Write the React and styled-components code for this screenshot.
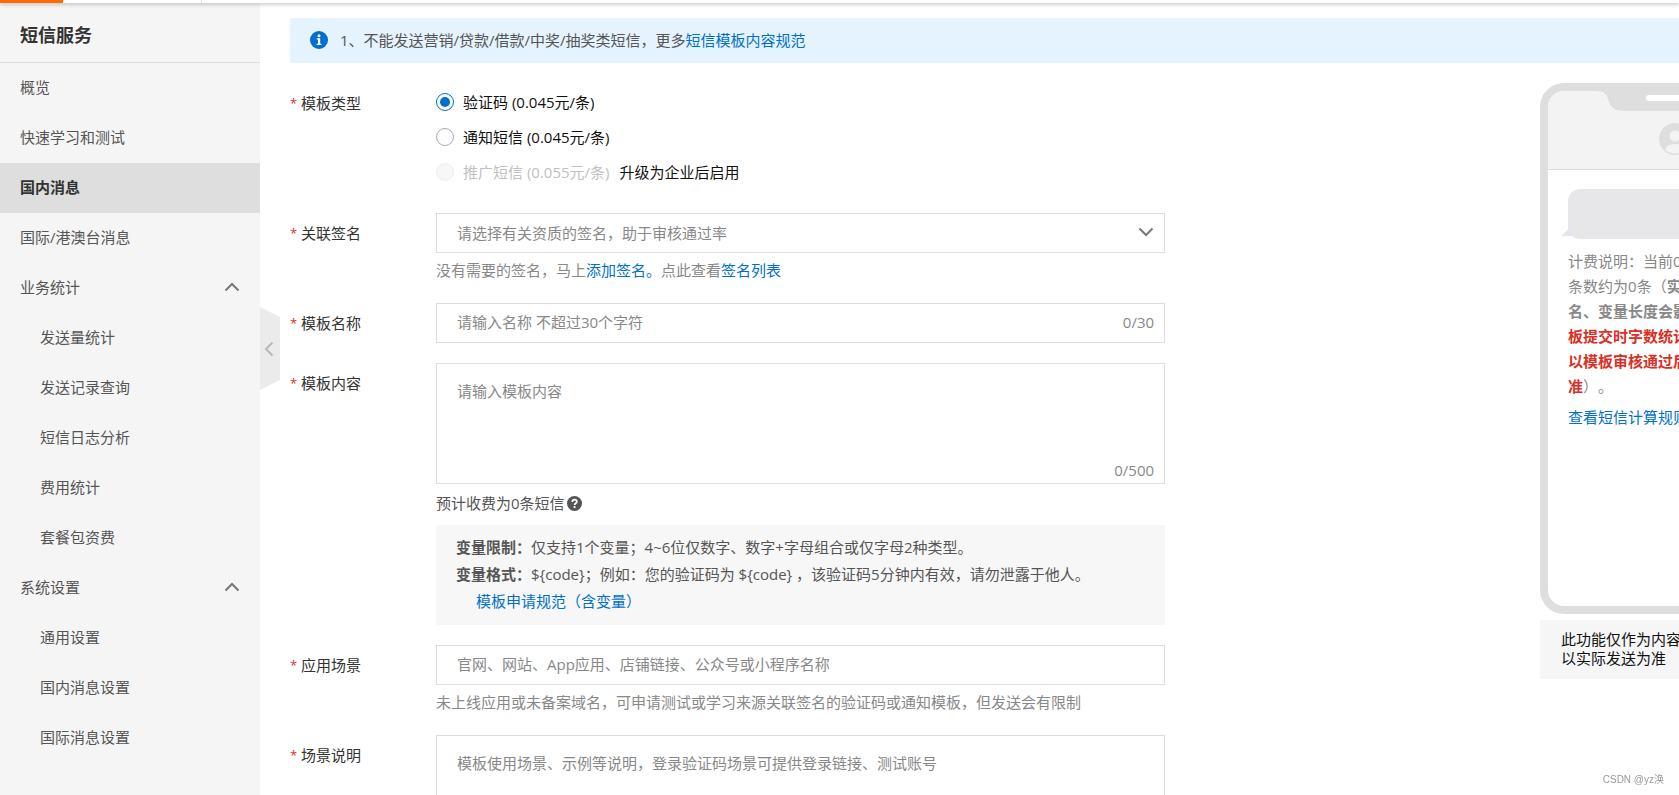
import React, { useState } from "react";
import styled, { createGlobalStyle } from "styled-components";

const GlobalStyle = createGlobalStyle`
  * {
    box-sizing: border-box;
  }

  body {
    margin: 0;
    overflow: hidden;
    background: #fff;
    color: #111;
    font-family: "Open Sans", "Noto Sans CJK SC", sans-serif;
    font-size: 15px;
    line-height: 20px;
    text-spacing-trim: space-all;
  }

  button, input, select, textarea {
    font: inherit;
  }

  a {
    color: #0070cc;
    text-decoration: none;
  }
`;

const Page = styled.div`
  display: flex;
  flex-direction: column;
  height: 100vh;
`;

const TopBar = styled.header`
  position: relative;
  z-index: 2;
  display: flex;
  flex: none;
  height: 3px;
  background: #fff;
  box-shadow: 0 1px 4px rgba(0, 0, 0, 0.3);
`;

const MenuMark = styled.div`
  width: 63px;
  background: #ff6a00;
`;

const TopDivider = styled.div`
  width: 139px;
  border-right: 1px solid #e3e3e3;
`;

const Body = styled.div`
  display: flex;
  flex: 1;
  min-height: 0;
`;

const Sidebar = styled.nav`
  position: relative;
  flex: none;
  width: 260px;
  background: #f5f5f5;
`;

const SideTitle = styled.h1`
  margin: 0;
  padding: 6px 20px 0;
  border-bottom: 1px solid #ddd;
  color: #333;
  font-size: 18px;
  line-height: 53px;
`;

const NavLink = styled.a`
  display: block;
  padding: 0 20px 2px ${(props) => (props.$sub ? "40px" : "20px")};
  background: ${(props) => (props.$active ? "#dedede" : "transparent")};
  color: ${(props) => (props.$active ? "#333" : "#555")};
  font-weight: ${(props) => (props.$active ? "bold" : "normal")};
  line-height: 48px;
`;

const NavGroup = styled.button`
  display: flex;
  align-items: center;
  justify-content: space-between;
  width: 100%;
  padding: 0 20px 2px;
  border: none;
  background: none;
  color: #555;
  line-height: 48px;
  cursor: pointer;
`;

const CollapseButton = styled.button`
  position: absolute;
  top: 304px;
  left: 100%;
  z-index: 1;
  display: flex;
  align-items: center;
  width: 20px;
  height: 83px;
  padding: 0 4px;
  border: none;
  background: #ebebeb;
  clip-path: polygon(0 0, 100% 10px, 100% 73px, 0 100%);
  cursor: pointer;
`;

const Main = styled.main`
  flex: 1;
  min-width: 0;
  padding: 15px 0 0 30px;
  overflow: hidden;
`;

const Notice = styled.div`
  display: flex;
  align-items: center;
  gap: 12px;
  height: 45px;
  padding: 0 0 1px 20px;
  background: #e4f3fe;
  color: #555;
`;

const Columns = styled.div`
  display: grid;
  grid-template-columns: 63fr 27fr 10fr;
  padding-top: 20px;
`;

const Form = styled.form`
  display: flex;
  flex-direction: column;
  gap: 20px;
`;

const Row = styled.div`
  display: flex;
`;

const Label = styled.label`
  display: flex;
  flex: none;
  align-items: center;
  width: 146px;
  height: 40px;
  color: #333;
`;

const Required = styled.span`
  width: 11px;
  color: #d93026;
  font-size: 13px;
`;

const Control = styled.div`
  flex: 1;
  min-width: 0;
`;

const RadioList = styled.div`
  padding: 1px 0 4px;
`;

const RadioRow = styled.div`
  display: flex;
  align-items: center;
  gap: 10px;
  height: 35px;
`;

const RadioLabel = styled.label`
  display: flex;
  align-items: center;
  gap: 9px;
  color: ${(props) => (props.$disabled ? "#c1c1c1" : "#111")};
`;

const Radio = styled.input`
  appearance: none;
  display: grid;
  place-items: center;
  width: 18px;
  height: 18px;
  margin: 0;
  border: 1px solid #aaa;
  border-radius: 50%;
  background: #fff;

  &:checked {
    border-color: #0070cc;
  }

  &:checked::before {
    content: "";
    width: 10px;
    height: 10px;
    border-radius: 50%;
    background: #0070cc;
  }

  &:disabled {
    border-color: #eee;
    background: #f7f7f7;
  }
`;

const FieldBox = styled.div`
  position: relative;
  display: flex;
`;

const Select = styled.select`
  appearance: none;
  width: 100%;
  height: 40px;
  padding: 0 50px 1px 20px;
  border: 1px solid #ddd;
  border-radius: 0;
  background: #fff;
  color: #888;
`;

const Input = styled.input`
  width: 100%;
  height: 40px;
  padding: 0 60px 2px 20px;
  border: 1px solid #ddd;
  color: #333;

  &::placeholder {
    color: #888;
  }
`;

const TextArea = styled.textarea`
  width: 100%;
  height: 121px;
  padding: 16px 20px;
  border: 1px solid #ddd;
  color: #333;
  line-height: 22px;
  resize: none;

  &::placeholder {
    color: #888;
  }
`;

const SelectArrow = styled.span`
  position: absolute;
  top: 0;
  right: 11px;
  display: flex;
  align-items: center;
  height: 38px;
  pointer-events: none;
`;

const Counter = styled.span`
  position: absolute;
  right: 11px;
  bottom: ${(props) => (props.$area ? "4px" : "11px")};
  color: #888;
`;

const Help = styled.p`
  margin: 0;
  padding-top: 4px;
  color: #888;
  line-height: 26px;
`;

const Charge = styled.p`
  display: flex;
  align-items: center;
  gap: 2px;
  height: 41px;
  margin: 0;
  padding-bottom: 3px;
  color: #555;
`;

const Rules = styled.div`
  padding: 9px 20px 10px;
  background: #f7f7f7;
  color: #555;
  line-height: 27px;

  p {
    margin: 0;
  }

  p:last-child {
    padding-left: 20px;
  }
`;

const Preview = styled.aside`
  min-width: 0;
`;

const Phone = styled.div`
  width: 268px;
  height: 531px;
  border: 8px solid #dedede;
  border-radius: 24px;
  overflow: hidden;
`;

const PhoneTop = styled.div`
  height: 79px;
  border-bottom: 1px solid #dedede;
  background: #f3f3f3;

  svg {
    display: block;
  }
`;

const PhoneBody = styled.div`
  padding: 19px 20px;
`;

const Bubble = styled.div`
  position: relative;
  height: 50px;
  margin-bottom: 10px;
  border-radius: 12px;
  background: #e7e7ea;

  &::before {
    content: "";
    position: absolute;
    left: -7px;
    bottom: 3px;
    width: 12px;
    height: 11px;
    background: #e4e5ee;
    clip-path: polygon(100% 0, 100% 100%, 0 100%);
  }
`;

const Billing = styled.p`
  display: flex;
  flex-direction: column;
  margin: 0 0 8px;
  color: #888;
  line-height: 25px;
  white-space: nowrap;
`;

const Danger = styled.b`
  color: #d93026;
`;

const PreviewNote = styled.p`
  width: 268px;
  margin: 6px 0 0;
  padding: 10px 21px 11px;
  background: #f6f6f6;
  line-height: 19px;
`;

const Watermark = styled.div`
  position: fixed;
  right: 15px;
  bottom: 8px;
  color: #999;
  font-family: "Liberation Sans", "Noto Sans CJK SC", sans-serif;
  font-size: 10px;
  line-height: 14px;
`;

const statItems = ["发送量统计", "发送记录查询", "短信日志分析", "费用统计", "套餐包资费"];
const settingItems = ["通用设置", "国内消息设置", "国际消息设置"];

const chevrons = {
  up: { w: 16, h: 10, d: "M1.5 8.5 L8 2 L14.5 8.5" },
  down: { w: 16, h: 10, d: "M1.5 1.5 L8 8 L14.5 1.5" },
  left: { w: 10, h: 16, d: "M8.5 1.5 L2 8 L8.5 14.5" },
};

function Chevron({ dir, color = "#777" }) {
  const { w, h, d } = chevrons[dir];
  return (
    <svg width={w} height={h} fill="none" stroke={color} strokeWidth="2">
      <path d={d} />
    </svg>
  );
}

function InfoIcon() {
  return (
    <svg width="18" height="18" viewBox="0 0 18 18">
      <circle cx="9" cy="9" r="9" fill="#0070cc" />
      <circle cx="9" cy="4.7" r="1.5" fill="#fff" />
      <path d="M6.8 7.2h3.4v5.6h1.3v1.3H6.7v-1.3H8V8.5H6.8z" fill="#fff" />
    </svg>
  );
}

function HelpIcon() {
  return (
    <svg width="15" height="15" viewBox="0 0 15 15">
      <circle cx="7.5" cy="7.5" r="7.5" fill="#555" />
      <path
        d="M5.3 6c0-1.5 1-2.3 2.3-2.3s2.2.8 2.2 2c0 1.6-2.1 1.6-2.1 3.2"
        fill="none"
        stroke="#fff"
        strokeWidth="1.7"
      />
      <circle cx="7.6" cy="11.1" r="1.1" fill="#fff" />
    </svg>
  );
}

function PhoneHeader() {
  return (
    <PhoneTop>
      <svg width="252" height="78" viewBox="0 0 252 78">
        <path
          d="M48 0C56 0 59 3 60 8C62 16 66 20 76 20H176C186 20 190 16 192 8C193 3 196 0 204 0Z"
          fill="#dedede"
        />
        <rect x="98" y="4" width="56" height="6" rx="3" fill="#fff" />
        <circle cx="127" cy="48" r="16" fill="#dedede" />
        <circle cx="127" cy="45" r="5.5" fill="#f3f3f3" />
        <path d="M117.500 59C118 55 122 53 127 53S136 55 136.500 59C131 63.500 123 63.500 117.500 59Z" fill="#f3f3f3" />
      </svg>
    </PhoneTop>
  );
}

function FieldLabel({ htmlFor, as, id, children }) {
  return (
    <Label htmlFor={htmlFor} as={as} id={id}>
      <Required>*</Required>
      {children}
    </Label>
  );
}

function SideNav() {
  const [open, setOpen] = useState({ stat: true, setting: true });

  const toggle = (key) => setOpen({ ...open, [key]: !open[key] });

  return (
    <Sidebar>
      <SideTitle>短信服务</SideTitle>
      <NavLink href="#">概览</NavLink>
      <NavLink href="#">快速学习和测试</NavLink>
      <NavLink href="#" $active>
        国内消息
      </NavLink>
      <NavLink href="#">国际/港澳台消息</NavLink>
      <NavGroup onClick={() => toggle("stat")}>
        业务统计
        <Chevron dir={open.stat ? "up" : "down"} />
      </NavGroup>
      {open.stat &&
        statItems.map((item) => (
          <NavLink href="#" key={item} $sub>
            {item}
          </NavLink>
        ))}
      <NavGroup onClick={() => toggle("setting")}>
        系统设置
        <Chevron dir={open.setting ? "up" : "down"} />
      </NavGroup>
      {open.setting &&
        settingItems.map((item) => (
          <NavLink href="#" key={item} $sub>
            {item}
          </NavLink>
        ))}
      <CollapseButton>
        <Chevron dir="left" color="#b8b8b8" />
      </CollapseButton>
    </Sidebar>
  );
}

function TemplateForm() {
  const [type, setType] = useState("code");
  const [name, setName] = useState("");
  const [content, setContent] = useState("");

  return (
    <Form>
      <Row role="radiogroup" aria-labelledby="type-label">
        <FieldLabel as="span" id="type-label">
          模板类型
        </FieldLabel>
        <Control>
          <RadioList>
            <RadioRow>
              <RadioLabel>
                <Radio type="radio" name="type" checked={type === "code"} onChange={() => setType("code")} />
                验证码 (0.045元/条)
              </RadioLabel>
            </RadioRow>
            <RadioRow>
              <RadioLabel>
                <Radio type="radio" name="type" checked={type === "notice"} onChange={() => setType("notice")} />
                通知短信 (0.045元/条)
              </RadioLabel>
            </RadioRow>
            <RadioRow>
              <RadioLabel $disabled>
                <Radio type="radio" name="type" disabled />
                推广短信 (0.055元/条)
              </RadioLabel>
              <span>升级为企业后启用</span>
            </RadioRow>
          </RadioList>
        </Control>
      </Row>

      <Row>
        <FieldLabel htmlFor="sign">关联签名</FieldLabel>
        <Control>
          <FieldBox>
            <Select id="sign">
              <option>请选择有关资质的签名，助于审核通过率</option>
            </Select>
            <SelectArrow>
              <Chevron dir="down" />
            </SelectArrow>
          </FieldBox>
          <Help>
            没有需要的签名，马上<a href="#">添加签名。</a>点此查看<a href="#">签名列表</a>
          </Help>
        </Control>
      </Row>

      <Row>
        <FieldLabel htmlFor="name">模板名称</FieldLabel>
        <Control>
          <FieldBox>
            <Input
              id="name"
              maxLength={30}
              placeholder="请输入名称 不超过30个字符"
              value={name}
              onChange={(e) => setName(e.target.value)}
            />
            <Counter>{name.length}/30</Counter>
          </FieldBox>
        </Control>
      </Row>

      <Row>
        <FieldLabel htmlFor="content">模板内容</FieldLabel>
        <Control>
          <FieldBox>
            <TextArea
              id="content"
              maxLength={500}
              placeholder="请输入模板内容"
              value={content}
              onChange={(e) => setContent(e.target.value)}
            />
            <Counter $area>{content.length}/500</Counter>
          </FieldBox>
          <Charge>
            预计收费为0条短信
            <HelpIcon />
          </Charge>
          <Rules>
            <p>
              <b>变量限制：</b>仅支持1个变量；4~6位仅数字、数字+字母组合或仅字母2种类型。
            </p>
            <p>
              <b>变量格式：</b>
              {"${code}；例如：您的验证码为 ${code} ，该验证码5分钟内有效，请勿泄露于他人。"}
            </p>
            <p>
              <a href="#">模板申请规范（含变量）</a>
            </p>
          </Rules>
        </Control>
      </Row>

      <Row>
        <FieldLabel htmlFor="scene">应用场景</FieldLabel>
        <Control>
          <FieldBox>
            <Input id="scene" placeholder="官网、网站、App应用、店铺链接、公众号或小程序名称" />
          </FieldBox>
          <Help>未上线应用或未备案域名，可申请测试或学习来源关联签名的验证码或通知模板，但发送会有限制</Help>
        </Control>
      </Row>

      <Row>
        <FieldLabel htmlFor="remark">场景说明</FieldLabel>
        <Control>
          <FieldBox>
            <TextArea id="remark" placeholder="模板使用场景、示例等说明，登录验证码场景可提供登录链接、测试账号" />
          </FieldBox>
        </Control>
      </Row>
    </Form>
  );
}

function PhonePreview() {
  return (
    <Preview>
      <Phone>
        <PhoneHeader />
        <PhoneBody>
          <Bubble />
          <Billing>
            <span>计费说明：当前0</span>
            <span>
              条数约为0条（<b>实</b>
            </span>
            <b>名、变量长度会影</b>
            <Danger>板提交时字数统计</Danger>
            <Danger>以模板审核通过后</Danger>
            <span>
              <Danger>准</Danger>）。
            </span>
          </Billing>
          <a href="#">查看短信计算规则</a>
        </PhoneBody>
      </Phone>
      <PreviewNote>
        此功能仅作为内容
        <br />
        以实际发送为准
      </PreviewNote>
    </Preview>
  );
}

function App() {
  return (
    <Page>
      <GlobalStyle />
      <TopBar>
        <MenuMark />
        <TopDivider />
      </TopBar>
      <Body>
        <SideNav />
        <Main>
          <Notice>
            <InfoIcon />
            <span>
              1、不能发送营销/贷款/借款/中奖/抽奖类短信，更多<a href="#">短信模板内容规范</a>
            </span>
          </Notice>
          <Columns>
            <TemplateForm />
            <div />
            <PhonePreview />
          </Columns>
        </Main>
      </Body>
      <Watermark>CSDN @yz涣</Watermark>
    </Page>
  );
}

export default App;
